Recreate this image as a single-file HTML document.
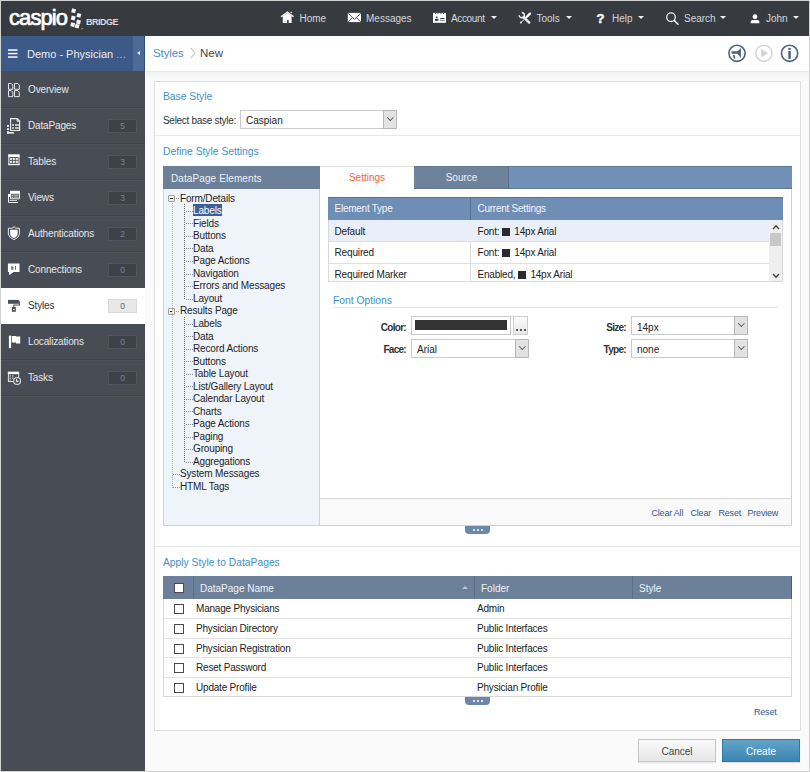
<!DOCTYPE html>
<html><head><meta charset="utf-8"><style>
*{box-sizing:border-box;margin:0;padding:0}
html,body{width:810px;height:772px;overflow:hidden}
body{position:relative;background:#d2d2d2;font-family:"Liberation Sans",sans-serif;font-size:10px;color:#333}
.a{position:absolute}
.t{position:absolute;white-space:nowrap;line-height:15px}
.caret{position:absolute;top:16.4px;width:0;height:0;border-left:3px solid transparent;border-right:3px solid transparent;border-top:3.5px solid #f0f0f0}
.nav{color:#d3d8de;font-size:10px;top:11px}
.item{position:absolute;left:1px;width:144px;height:36px}
.sl{position:absolute;left:1px;width:144px;height:1px}
.badge{position:absolute;left:108px;width:29px;height:14px;background:#3d4248;border:1px solid #50555c;color:#71849a;font-size:8.5px;line-height:12px;text-align:center}
.stxt{color:#e4e6e8;font-size:10px;letter-spacing:-0.15px}
.h{color:#4190c6;font-size:10.3px}
.sel{position:absolute;background:#fff;border:1px solid #cacaca}
.dd{position:absolute;right:0;top:0;width:14px;height:100%;background:#e2e2e2;border:1px solid #b8b8b8;margin:-1px -1px 0 0;height:calc(100% + 2px)}
.dd:after{content:"";position:absolute;left:3.5px;top:4px;width:3.6px;height:3.6px;border-right:1px solid #555;border-bottom:1px solid #555;transform:rotate(45deg)}
.tn{color:#1e1e1e;font-size:10px;letter-spacing:-0.15px}
.vd{position:absolute;width:1px;background-image:linear-gradient(to bottom,var(--c) 50%,transparent 50%);background-size:1px 2px}
.hd{position:absolute;height:1px;background-image:linear-gradient(to right,var(--c) 50%,transparent 50%);background-size:2px 1px}
.sq{display:inline-block;width:8px;height:8px;background:#2a2a2a;vertical-align:-1px;margin:0 4px 0 3px}
.cb{position:absolute;width:10px;height:10px;border:1px solid #4a4a4a;background:#fff}
.lnk{color:#33598a;font-size:9px;letter-spacing:-0.2px}
.handle{position:absolute;width:25px;height:8px;background:#6b88ab;border-radius:0 0 4px 4px}
.handle i{position:absolute;top:3px;width:2px;height:2px;background:#fff;border-radius:1px}
</style></head><body>
<div class="a" style="left:1px;top:1px;width:808px;height:770px;background:#fafafa"></div>
<div class="a" style="left:1px;top:1px;width:808px;height:35px;background:#373b40"></div>
<div class="t" style="left:9px;top:6.1px;font-size:22px;line-height:24px;color:#fff;letter-spacing:-0.9px;-webkit-text-stroke:0.7px #fff">caspio</div>
<svg class="a" style="left:64px;top:4px" width="26" height="28" viewBox="64 4 26 28"><g fill="#f4f4f4">
<rect x="71.6" y="8.8" width="4" height="4" transform="rotate(15 73.6 10.8)"/>
<rect x="76.9" y="13.4" width="4" height="4" transform="rotate(15 78.9 15.4)"/>
<rect x="71.2" y="16" width="4" height="4" transform="rotate(15 73.2 18)"/>
<rect x="76.5" y="20" width="4" height="4" transform="rotate(15 78.5 22)"/>
<rect x="70.7" y="22.7" width="4" height="4" transform="rotate(15 72.7 24.7)"/>
<rect x="75.1" y="24.1" width="4" height="4" transform="rotate(15 77.1 26.1)"/>
<rect x="81" y="28.2" width="2" height="1" fill="#999"/></g></svg>
<div class="t" style="left:86px;top:16.5px;font-size:9px;line-height:10px;color:#d8dbde;letter-spacing:-0.5px;font-weight:bold">BRIDGE</div>
<svg class="a" style="left:279px;top:10px" width="16" height="15" viewBox="279 10 16 15"><path d="M281 16.8 L287.4 12.2 L293.6 16.8" stroke="#f4f4f4" stroke-width="1.4" fill="none" stroke-linejoin="miter"/><path d="M282.8 16 L287.4 12.9 L291.6 16 V23.1 H288.7 V20 H287.1 V23.1 H282.8 Z" fill="#fff"/><rect x="290.5" y="11.8" width="1.6" height="1.3" fill="#ddd"/></svg>
<div class="t nav" style="left:299.5px">Home</div>
<svg class="a" style="left:346px;top:11px" width="17" height="13" viewBox="346 11 17 13"><rect x="347.8" y="12.9" width="13.2" height="9.2" fill="#fff"/><path d="M348 13.2 L354.4 19.4 L360.8 13.2 M348 21.8 L352.6 17.4 M360.8 21.8 L356.2 17.4" stroke="#555a60" stroke-width="1" fill="none"/></svg>
<div class="t nav" style="left:366px">Messages</div>
<svg class="a" style="left:432px;top:12px" width="15" height="12" viewBox="432 12 15 12"><rect x="433" y="12.9" width="13" height="9.9" fill="#fff"/><g fill="#373b40"><rect x="435.2" y="12.9" width="0.9" height="1.2"/><rect x="437.6" y="12.9" width="0.9" height="1.2"/><rect x="440.6" y="12.9" width="0.9" height="1.2"/><rect x="443" y="12.9" width="0.9" height="1.2"/><circle cx="436.7" cy="17.3" r="0.9"/><rect x="435" y="18.8" width="3.5" height="2"/><rect x="440.2" y="18" width="4.3" height="1.1"/></g><rect x="440.2" y="20" width="4.3" height="0.9" fill="#777"/></svg>
<div class="t nav" style="left:451px;letter-spacing:-0.35px">Account</div><span class="caret" style="left:490.5px"></span>
<svg class="a" style="left:517px;top:11px" width="16" height="14" viewBox="517 11 16 14"><path d="M521.8 12.6 A2.6 2.6 0 1 1 519.2 15.2" stroke="#f0f0f0" stroke-width="1.5" fill="none"/><path d="M523.6 17.2 L529.2 22.6" stroke="#f0f0f0" stroke-width="2.4" stroke-linecap="round"/><path d="M530 13.6 L526.4 17.2" stroke="#fff" stroke-width="2.3" stroke-linecap="round"/><path d="M525.8 17.8 L520.8 22.6" stroke="#e8e8e8" stroke-width="1"/><circle cx="521" cy="22.4" r="1" fill="#fff"/></svg>
<div class="t nav" style="left:536.5px">Tools</div><span class="caret" style="left:565.5px"></span>
<div class="t" style="left:596.5px;top:10.7px;font-weight:bold;font-size:13px;line-height:15px;color:#fff;-webkit-text-stroke:0.5px #fff">?</div>
<div class="t nav" style="left:612px">Help</div><span class="caret" style="left:638px"></span>
<svg class="a" style="left:664px;top:11px" width="16" height="15" viewBox="664 11 16 15"><circle cx="671" cy="17.2" r="4.3" fill="none" stroke="#eee" stroke-width="1.3"/><path d="M674.2 20.4 L678 24.2" stroke="#eee" stroke-width="1.6" stroke-linecap="round"/></svg>
<div class="t nav" style="left:684px">Search</div><span class="caret" style="left:720px"></span>
<svg class="a" style="left:749px;top:13px" width="12" height="12" viewBox="749 13 12 12"><circle cx="755" cy="16.7" r="2.4" fill="#fff"/><path d="M750.7 23.2 V21.6 Q750.7 19.9 752.5 19.9 H757.5 Q759.3 19.9 759.3 21.6 V23.2 Z" fill="#fff"/></svg>
<div class="t nav" style="left:766px">John</div><span class="caret" style="left:793px"></span>
<div class="a" style="left:1px;top:36px;width:144px;height:735px;background:#484d55"></div>
<div class="a" style="left:1px;top:36px;width:132px;height:35px;background:#3b5a87"></div>
<div class="a" style="left:133px;top:36px;width:12px;height:35px;background:#4c6b97;border-right:1px solid #2f4d78"></div>
<span class="a" style="left:136.5px;top:50.5px;width:0;height:0;border-top:2.7px solid transparent;border-bottom:2.7px solid transparent;border-right:3px solid #e6ebf2"></span>
<svg class="a" style="left:8px;top:48px" width="10" height="10" viewBox="0 0 10 10"><rect y="1.3" width="9.5" height="1.5" fill="#fff"/><rect y="4.8" width="9.5" height="1.5" fill="#fff"/><rect y="8.3" width="9.5" height="1.5" fill="#fff"/></svg>
<div class="t" style="left:27px;top:48px;font-size:11px;line-height:13px;color:#e8eef5">Demo - Physician <span style="color:#a9bad2;letter-spacing:0.3px">...</span></div>
<svg class="a" style="left:0;top:71px" width="24" height="36" viewBox="0 0 24 36"><g fill="none" stroke="#e2e4e6" stroke-width="1"><path d="M8.5 12.5 H11.3 L12.8 14 V18.3 H8.5 Z"/><path d="M14.5 12.5 H17.8 L19.3 14 V18.3 H14.5 Z"/><path d="M8.5 19.6 H11.3 L12.8 21.1 V25.6 H8.5 Z"/><path d="M14.5 19.6 H17.8 L19.3 21.1 V25.6 H14.5 Z"/></g></svg>
<div class="t stxt" style="left:28px;top:82.4px;color:#e4e6e8">Overview</div>
<div class="sl" style="top:107px;background:#40454b"></div><div class="sl" style="top:108px;background:#4e535a"></div>
<svg class="a" style="left:0;top:107px" width="24" height="36" viewBox="0 0 24 36"><path d="M10.6 11.6 H17.2 L19.6 14 V23.5 H10.6 Z" fill="none" stroke="#eee" stroke-width="1.1"/><path d="M17 11.6 V14.2 H19.6" fill="none" stroke="#eee" stroke-width="1"/><g fill="#eee"><rect x="12" y="17.3" width="2" height="1.4"/><rect x="15" y="17.3" width="4" height="1.4"/><rect x="12" y="20.3" width="2" height="1.4"/><rect x="15" y="20.3" width="4" height="1.4"/><rect x="7" y="18" width="2" height="1.9"/><rect x="7" y="21.2" width="2" height="1.9"/><rect x="7" y="24.3" width="2" height="2.3"/><rect x="7" y="25" width="7" height="1.6"/></g></svg>
<div class="t stxt" style="left:28px;top:118.4px;color:#e4e6e8">DataPages</div>
<div class="badge" style="top:119px;">5</div>
<div class="sl" style="top:143px;background:#40454b"></div><div class="sl" style="top:144px;background:#4e535a"></div>
<svg class="a" style="left:0;top:143px" width="24" height="36" viewBox="0 0 24 36"><rect x="8.8" y="12" width="10.2" height="9.6" fill="none" stroke="#eee" stroke-width="1"/><rect x="8.3" y="11.5" width="11.2" height="2.6" fill="#fff"/><g fill="#ddd"><rect x="9.9" y="15" width="2.2" height="2.2"/><rect x="12.8" y="15" width="2.2" height="2.2"/><rect x="15.7" y="15" width="2.2" height="2.2"/><rect x="9.9" y="17.9" width="2.2" height="2.2"/><rect x="12.8" y="17.9" width="2.2" height="2.2"/><rect x="15.7" y="17.9" width="2.2" height="2.2"/></g><rect x="8.3" y="20.9" width="11.2" height="1.2" fill="#fff"/></svg>
<div class="t stxt" style="left:28px;top:154.4px;color:#e4e6e8">Tables</div>
<div class="badge" style="top:155px;">3</div>
<div class="sl" style="top:179px;background:#40454b"></div><div class="sl" style="top:180px;background:#4e535a"></div>
<svg class="a" style="left:0;top:179px" width="24" height="36" viewBox="0 0 24 36"><rect x="10" y="11.8" width="10" height="3" fill="#fff"/><path d="M10.5 14.5 V19.8 H19.5 V14.5" fill="none" stroke="#eee" stroke-width="1"/><g fill="#ddd"><rect x="11.5" y="15.6" width="1.4" height="1.2"/><rect x="13.5" y="15.6" width="5" height="1"/><rect x="11.5" y="17.6" width="1.4" height="1.2"/><rect x="13.5" y="17.6" width="5" height="1"/></g><rect x="8" y="15" width="2" height="3" fill="#fff"/><path d="M8.5 18 V23.5 H18" fill="none" stroke="#eee" stroke-width="1"/><rect x="9.5" y="21" width="7.5" height="1" fill="#ccc"/></svg>
<div class="t stxt" style="left:28px;top:190.4px;color:#e4e6e8">Views</div>
<div class="badge" style="top:191px;">3</div>
<div class="sl" style="top:215px;background:#40454b"></div><div class="sl" style="top:216px;background:#4e535a"></div>
<svg class="a" style="left:0;top:215px" width="24" height="36" viewBox="0 0 24 36"><path d="M8.4 13.2 H12.6 L14 11.5 L15.4 13.2 H19.4 V19 Q19.4 22.4 14 24.7 Q8.4 22.4 8.4 19 Z" fill="none" stroke="#e6e6e6" stroke-width="1"/><path d="M10.2 14.8 H17.6 V19 Q17.6 21.6 14 23 Q10.2 21.6 10.2 19 Z" fill="#fff"/></svg>
<div class="t stxt" style="left:28px;top:226.4px;color:#e4e6e8">Authentications</div>
<div class="badge" style="top:227px;">2</div>
<div class="sl" style="top:251px;background:#40454b"></div><div class="sl" style="top:252px;background:#4e535a"></div>
<svg class="a" style="left:0;top:251px" width="24" height="36" viewBox="0 0 24 36"><path d="M7.9 12.4 H19.5 V20.9 H13.5 L9.3 24.3 L9 20.9 H7.9 Z" fill="#fff"/><g fill="#4a4f57"><rect x="11.4" y="14.8" width="1" height="3.8"/><rect x="12.2" y="16.2" width="1.2" height="2.4"/><rect x="15" y="14.9" width="1" height="1"/><rect x="15" y="16.3" width="1" height="2.3"/></g></svg>
<div class="t stxt" style="left:28px;top:262.4px;color:#e4e6e8">Connections</div>
<div class="badge" style="top:263px;">0</div>
<div class="item" style="top:288px;height:36px;background:#fff"></div>
<svg class="a" style="left:0;top:287px" width="24" height="36" viewBox="0 0 24 36"><g fill="#4a5058"><rect x="8" y="12.9" width="10.9" height="3.9"/><path d="M18.9 14.2 H20 V18.6 H14.3 V20 H13.3 V17.6 H19 V14.2 Z"/><rect x="11.9" y="19.9" width="3.9" height="4.9"/></g><circle cx="13.9" cy="22.5" r="0.7" fill="#fff"/></svg>
<div class="t stxt" style="left:28px;top:298.4px;color:#333">Styles</div>
<div class="badge" style="top:299px;background:#e8e8e8;border-color:#d9d9d9;color:#5a6470;">0</div>
<svg class="a" style="left:0;top:323px" width="24" height="36" viewBox="0 0 24 36"><rect x="8.9" y="12.6" width="2.2" height="12.5" fill="#fff"/><path d="M11.8 13.1 H16 V13.6 H20.2 V20.4 H16 V19.6 H11.8 Z" fill="#fff"/></svg>
<div class="t stxt" style="left:28px;top:334.4px;color:#e4e6e8">Localizations</div>
<div class="badge" style="top:335px;">0</div>
<div class="sl" style="top:359px;background:#40454b"></div><div class="sl" style="top:360px;background:#4e535a"></div>
<svg class="a" style="left:0;top:359px" width="24" height="36" viewBox="0 0 24 36"><rect x="8.4" y="13.3" width="10.2" height="9.2" fill="none" stroke="#e4e4e4" stroke-width="1"/><rect x="7.9" y="12.8" width="11.2" height="2.4" fill="#fff"/><g fill="#bbb"><rect x="9.5" y="16.3" width="1.6" height="1.3"/><rect x="12" y="16.3" width="1.6" height="1.3"/><rect x="9.5" y="18.6" width="1.6" height="1.3"/><rect x="12" y="18.6" width="1.6" height="1.3"/><rect x="9.5" y="20.6" width="1.6" height="1"/></g><circle cx="17.1" cy="21.9" r="3.4" fill="#484d55" stroke="#d8d8d8" stroke-width="1.2"/><path d="M16.6 19.8 V22.4 H18.6" fill="none" stroke="#eee" stroke-width="1.1"/></svg>
<div class="t stxt" style="left:28px;top:370.4px;color:#e4e6e8">Tasks</div>
<div class="badge" style="top:371px;">0</div>
<div class="sl" style="top:395px;background:#40454b"></div><div class="sl" style="top:396px;background:#4e535a"></div>
<div class="a" style="left:145px;top:36px;width:664px;height:35px;background:#fff"></div>
<div class="a" style="left:146px;top:71px;width:663px;height:1px;background:#e9e9e9"></div>
<div class="a" style="left:146px;top:72px;width:663px;height:7px;background:linear-gradient(#f3f3f3,#fafafa)"></div>
<div class="t" style="left:153px;top:46px;font-size:11.5px;line-height:14px;color:#4a8fc2;letter-spacing:-0.1px">Styles</div>
<svg class="a" style="left:190px;top:47px" width="6" height="12" viewBox="0 0 6 12"><path d="M0.8 0.8 L5 6 L0.8 11.2" stroke="#c4c4c4" stroke-width="1.1" fill="none"/></svg>
<div class="t" style="left:200px;top:46px;font-size:11.5px;line-height:14px;color:#444">New</div>
<svg class="a" style="left:726px;top:42px" width="24" height="24" viewBox="726 42 24 24"><circle cx="737" cy="53.3" r="8.1" fill="none" stroke="#4f6378" stroke-width="1.6"/><path d="M732 51.2 H737.5 L740.9 48 V57.9 L737.5 53.8 H732 Q731.3 53.8 731.3 52.5 Q731.3 51.2 732 51.2 Z" fill="#4f6378"/><path d="M732.8 55.1 H734.6 L735.5 58.6 H733.7 Z" fill="#4f6378"/></svg>
<svg class="a" style="left:752px;top:42px" width="24" height="24" viewBox="752 42 24 24"><circle cx="763.9" cy="53.3" r="8.1" fill="none" stroke="#d4d4d4" stroke-width="1.5"/><path d="M761.2 49.1 L768 53.2 L761.2 57.1 Z" fill="#d2d2d2"/></svg>
<svg class="a" style="left:778px;top:42px" width="24" height="24" viewBox="778 42 24 24"><circle cx="789.6" cy="53.3" r="8.1" fill="none" stroke="#4f6378" stroke-width="1.6"/><rect x="788.3" y="47.9" width="2.5" height="1.9" fill="#4f6378"/><rect x="788.3" y="50.9" width="2.5" height="8" fill="#4f6378"/></svg>
<div class="a" style="left:154px;top:81px;width:647px;height:650px;background:#fff;border:1px solid #dedede"></div>
<div class="t h" style="left:163px;top:89px">Base Style</div>
<div class="t" style="left:163px;top:112.5px;letter-spacing:-0.3px;color:#333">Select base style:</div>
<div class="sel" style="left:240px;top:110px;width:157px;height:19px"><span class="t" style="left:5px;top:1.5px;color:#222">Caspian</span><span class="dd"></span></div>
<div class="a" style="left:155px;top:135px;width:645px;height:1px;background:#e9e9e9"></div>
<div class="t h" style="left:163px;top:144px">Define Style Settings</div>
<div class="a" style="left:163px;top:166px;width:157px;height:360px;background:#eff4fb;border:1px solid #d2d2d2"></div>
<div class="a" style="left:163px;top:166px;width:157px;height:23px;background:#6c8099"></div>
<div class="t" style="left:171px;top:171px;color:#eef2f6;font-size:10px;letter-spacing:0.1px">DataPage Elements</div>
<div class="a" style="left:168px;top:195px;width:7px;height:7px;border:1px solid #a0a0a0;background:linear-gradient(#fff,#e6e6e6);border-radius:1px"></div>
<div class="a" style="left:170px;top:198px;width:3px;height:1px;background:#333"></div>
<div class="hd" style="--c:#999;left:176px;top:198px;width:4px"></div>
<div class="t tn" style="left:180px;top:190.60px">Form/Details</div>
<div class="hd" style="--c:#888;left:186px;top:211px;width:7px"></div>
<div class="a" style="left:193px;top:203.64px;width:29px;height:12px;background:#3d6098"></div>
<div class="t tn" style="left:193px;top:203.14px;color:#fff">Labels</div>
<div class="hd" style="--c:#888;left:186px;top:223px;width:7px"></div>
<div class="t tn" style="left:193px;top:215.68px">Fields</div>
<div class="hd" style="--c:#888;left:186px;top:236px;width:7px"></div>
<div class="t tn" style="left:193px;top:228.22px">Buttons</div>
<div class="hd" style="--c:#888;left:186px;top:248px;width:7px"></div>
<div class="t tn" style="left:193px;top:240.76px">Data</div>
<div class="hd" style="--c:#888;left:186px;top:261px;width:7px"></div>
<div class="t tn" style="left:193px;top:253.30px">Page Actions</div>
<div class="hd" style="--c:#888;left:186px;top:274px;width:7px"></div>
<div class="t tn" style="left:193px;top:265.84px">Navigation</div>
<div class="hd" style="--c:#888;left:186px;top:286px;width:7px"></div>
<div class="t tn" style="left:193px;top:278.38px">Errors and Messages</div>
<div class="hd" style="--c:#888;left:186px;top:299px;width:7px"></div>
<div class="t tn" style="left:193px;top:290.92px">Layout</div>
<div class="a" style="left:168px;top:308px;width:7px;height:7px;border:1px solid #a0a0a0;background:linear-gradient(#fff,#e6e6e6);border-radius:1px"></div>
<div class="a" style="left:170px;top:311px;width:3px;height:1px;background:#333"></div>
<div class="hd" style="--c:#999;left:176px;top:311px;width:4px"></div>
<div class="t tn" style="left:180px;top:303.46px">Results Page</div>
<div class="hd" style="--c:#888;left:186px;top:324px;width:7px"></div>
<div class="t tn" style="left:193px;top:316.00px">Labels</div>
<div class="hd" style="--c:#888;left:186px;top:336px;width:7px"></div>
<div class="t tn" style="left:193px;top:328.54px">Data</div>
<div class="hd" style="--c:#888;left:186px;top:349px;width:7px"></div>
<div class="t tn" style="left:193px;top:341.08px">Record Actions</div>
<div class="hd" style="--c:#888;left:186px;top:361px;width:7px"></div>
<div class="t tn" style="left:193px;top:353.62px">Buttons</div>
<div class="hd" style="--c:#888;left:186px;top:374px;width:7px"></div>
<div class="t tn" style="left:193px;top:366.16px">Table Layout</div>
<div class="hd" style="--c:#888;left:186px;top:386px;width:7px"></div>
<div class="t tn" style="left:193px;top:378.70px">List/Gallery Layout</div>
<div class="hd" style="--c:#888;left:186px;top:399px;width:7px"></div>
<div class="t tn" style="left:193px;top:391.24px">Calendar Layout</div>
<div class="hd" style="--c:#888;left:186px;top:411px;width:7px"></div>
<div class="t tn" style="left:193px;top:403.78px">Charts</div>
<div class="hd" style="--c:#888;left:186px;top:424px;width:7px"></div>
<div class="t tn" style="left:193px;top:416.32px">Page Actions</div>
<div class="hd" style="--c:#888;left:186px;top:437px;width:7px"></div>
<div class="t tn" style="left:193px;top:428.86px">Paging</div>
<div class="hd" style="--c:#888;left:186px;top:449px;width:7px"></div>
<div class="t tn" style="left:193px;top:441.40px">Grouping</div>
<div class="hd" style="--c:#888;left:186px;top:462px;width:7px"></div>
<div class="t tn" style="left:193px;top:453.94px">Aggregations</div>
<div class="hd" style="--c:#999;left:173px;top:474px;width:7px"></div>
<div class="t tn" style="left:180px;top:466.48px">System Messages</div>
<div class="hd" style="--c:#999;left:173px;top:487px;width:7px"></div>
<div class="t tn" style="left:180px;top:479.02px">HTML Tags</div>
<div class="vd" style="--c:#bdbdbd;left:172px;top:203px;height:285px"></div>
<div class="vd" style="--c:#666;left:184px;top:204px;height:96px"></div>
<div class="vd" style="--c:#666;left:184px;top:317px;height:146px"></div>
<div class="a" style="left:320px;top:166px;width:472px;height:23px;background:#7090b7"></div>
<div class="a" style="left:320px;top:166px;width:94px;height:23px;background:#fff"></div>
<div class="t" style="left:320px;top:170px;width:94px;text-align:center;color:#ec6641">Settings</div>
<div class="a" style="left:414px;top:166px;width:95px;height:23px;background:#6e8299"></div>
<div class="a" style="left:414px;top:166px;width:378px;height:1px;background:#5f7895"></div>
<div class="a" style="left:414px;top:188px;width:378px;height:1px;background:#5f7895"></div>
<div class="a" style="left:508px;top:166px;width:1px;height:23px;background:#5a6d84"></div>
<div class="a" style="left:320px;top:166px;width:94px;height:1px;background:#dedede"></div>
<div class="t" style="left:414px;top:170px;width:95px;text-align:center;color:#eef2f6">Source</div>
<div class="a" style="left:320px;top:189px;width:472px;height:337px;background:#fff;border:1px solid #d0d0d0;border-left:none;border-top:none"></div>
<div class="a" style="left:328px;top:197px;width:455px;height:85px;border:1px solid #d8d8d8;background:#fff"></div>
<div class="a" style="left:328px;top:197px;width:455px;height:23px;background:#6f8eb6;border-top:1px solid #5a7396"></div>
<div class="a" style="left:470px;top:197px;width:1px;height:85px;background:#dcdcdc"></div>
<div class="a" style="left:470px;top:197px;width:1px;height:23px;background:#57708f"></div>
<div class="t" style="left:334.5px;top:201px;color:#f2f5f9;letter-spacing:-0.25px">Element Type</div>
<div class="t" style="left:477.5px;top:201px;color:#f2f5f9;letter-spacing:-0.25px">Current Settings</div>
<div class="a" style="left:329px;top:220px;width:441px;height:21px;background:#e9eef8"></div>
<div class="a" style="left:329px;top:241px;width:441px;height:1px;background:#e0e0e0"></div>
<div class="a" style="left:329px;top:263px;width:441px;height:1px;background:#e0e0e0"></div>
<div class="t" style="left:334.5px;top:223.6px;color:#222;letter-spacing:-0.15px">Default</div>
<div class="t" style="left:477.5px;top:223.6px;color:#222;letter-spacing:-0.2px">Font:<span class="sq"></span>14px Arial</div>
<div class="t" style="left:334.5px;top:245.4px;color:#222;letter-spacing:-0.15px">Required</div>
<div class="t" style="left:477.5px;top:245.4px;color:#222;letter-spacing:-0.2px">Font:<span class="sq"></span>14px Arial</div>
<div class="t" style="left:334.5px;top:267.2px;color:#222;letter-spacing:-0.15px">Required Marker</div>
<div class="t" style="left:477.5px;top:267.2px;color:#222;letter-spacing:-0.2px">Enabled,<span class="sq"></span>14px Arial</div>
<div class="a" style="left:769px;top:220px;width:13px;height:61px;background:#efefef"></div>
<div class="a" style="left:770px;top:233px;width:11px;height:13px;background:#c8c8c8"></div>
<svg class="a" style="left:772px;top:224px" width="8" height="6" viewBox="0 0 8 6"><path d="M1 5 L4 1.8 L7 5" stroke="#444" stroke-width="1.4" fill="none"/></svg>
<svg class="a" style="left:772px;top:272.5px" width="8" height="6" viewBox="0 0 8 6"><path d="M1 1 L4 4.2 L7 1" stroke="#444" stroke-width="1.4" fill="none"/></svg>
<div class="t h" style="left:333px;top:293px">Font Options</div>
<div class="a" style="left:333px;top:307px;width:445px;height:1px;background:#e6e6e6"></div>
<div class="t" style="left:350px;top:320px;width:56px;text-align:right;font-weight:bold;font-size:10px;letter-spacing:-0.7px;color:#333">Color:</div>
<div class="t" style="left:350px;top:342px;width:56px;text-align:right;font-weight:bold;font-size:10px;letter-spacing:-0.7px;color:#333">Face:</div>
<div class="t" style="left:570px;top:320px;width:56px;text-align:right;font-weight:bold;font-size:10px;letter-spacing:-0.7px;color:#333">Size:</div>
<div class="t" style="left:570px;top:342px;width:56px;text-align:right;font-weight:bold;font-size:10px;letter-spacing:-0.7px;color:#333">Type:</div>
<div class="sel" style="left:411px;top:316px;width:100px;height:19px"><span class="a" style="left:3px;top:3px;width:92px;height:10px;background:#333"></span></div>
<div class="a" style="left:513px;top:316px;width:15px;height:19px;background:linear-gradient(#fbfbfb,#e8e8e8);border:1px solid #cfcfcf"><span class="a" style="left:2px;top:12px;width:2px;height:2px;background:#555"></span><span class="a" style="left:6px;top:12px;width:2px;height:2px;background:#555"></span><span class="a" style="left:10px;top:12px;width:2px;height:2px;background:#555"></span></div>
<div class="sel" style="left:411px;top:339px;width:118px;height:19px"><span class="t" style="left:5px;top:1.5px;color:#222">Arial</span><span class="dd"></span></div>
<div class="sel" style="left:631px;top:316px;width:117px;height:19px"><span class="t" style="left:5px;top:3px;color:#222">14px</span><span class="dd"></span></div>
<div class="sel" style="left:631px;top:339px;width:117px;height:19px"><span class="t" style="left:5px;top:1.5px;color:#222">none</span><span class="dd"></span></div>
<div class="a" style="left:320px;top:498px;width:472px;height:28px;background:#f9f9f9;border-top:1px solid #d6d6d6;border-bottom:1px solid #d0d0d0;border-right:1px solid #d0d0d0"></div>
<div class="t lnk" style="left:651.5px;top:505.5px">Clear All</div>
<div class="t lnk" style="left:690.5px;top:505.5px">Clear</div>
<div class="t lnk" style="left:718.5px;top:505.5px">Reset</div>
<div class="t lnk" style="left:747.5px;top:505.5px">Preview</div>
<div class="handle" style="left:465px;top:526px"><i style="left:8px"></i><i style="left:12px"></i><i style="left:16px"></i></div>
<div class="a" style="left:155px;top:546px;width:645px;height:1px;background:#e9e9e9"></div>
<div class="t h" style="left:163px;top:555px">Apply Style to DataPages</div>
<div class="a" style="left:163px;top:576px;width:629px;height:121px;border:1px solid #d8d8d8;background:#fff"></div>
<div class="a" style="left:163px;top:576px;width:629px;height:23px;background:#6c8099;border-right:1px solid #4d5f74"></div>
<div class="a" style="left:193px;top:576px;width:1px;height:23px;background:#5c6f88"></div>
<div class="a" style="left:474px;top:576px;width:1px;height:23px;background:#5c6f88"></div>
<div class="a" style="left:632px;top:576px;width:1px;height:23px;background:#5c6f88"></div>
<div class="cb" style="left:174px;top:583px"></div>
<div class="t" style="left:200px;top:581px;color:#f0f3f6">DataPage Name</div>
<span class="a" style="left:462px;top:586px;width:0;height:0;border-left:3.5px solid transparent;border-right:3.5px solid transparent;border-bottom:3.5px solid #b8c3d0"></span>
<div class="t" style="left:481px;top:581px;color:#f0f3f6">Folder</div>
<div class="t" style="left:639px;top:581px;color:#f0f3f6">Style</div>
<div class="cb" style="left:174px;top:604px"></div>
<div class="t" style="left:196px;top:601.3px;color:#222;letter-spacing:-0.2px">Manage Physicians</div>
<div class="t" style="left:477px;top:601.3px;color:#222;letter-spacing:-0.2px">Admin</div>
<div class="a" style="left:164px;top:618.1px;width:627px;height:1px;background:#e2e2e2"></div>
<div class="cb" style="left:174px;top:624px"></div>
<div class="t" style="left:196px;top:620.9px;color:#222;letter-spacing:-0.2px">Physician Directory</div>
<div class="t" style="left:477px;top:620.9px;color:#222;letter-spacing:-0.2px">Public Interfaces</div>
<div class="a" style="left:164px;top:637.7px;width:627px;height:1px;background:#e2e2e2"></div>
<div class="cb" style="left:174px;top:644px"></div>
<div class="t" style="left:196px;top:640.5px;color:#222;letter-spacing:-0.2px">Physician Registration</div>
<div class="t" style="left:477px;top:640.5px;color:#222;letter-spacing:-0.2px">Public Interfaces</div>
<div class="a" style="left:164px;top:657.3px;width:627px;height:1px;background:#e2e2e2"></div>
<div class="cb" style="left:174px;top:663px"></div>
<div class="t" style="left:196px;top:660.1px;color:#222;letter-spacing:-0.2px">Reset Password</div>
<div class="t" style="left:477px;top:660.1px;color:#222;letter-spacing:-0.2px">Public Interfaces</div>
<div class="a" style="left:164px;top:676.9px;width:627px;height:1px;background:#e2e2e2"></div>
<div class="cb" style="left:174px;top:683px"></div>
<div class="t" style="left:196px;top:679.7px;color:#222;letter-spacing:-0.2px">Update Profile</div>
<div class="t" style="left:477px;top:679.7px;color:#222;letter-spacing:-0.2px">Physician Profile</div>
<div class="handle" style="left:465px;top:697px"><i style="left:8px"></i><i style="left:12px"></i><i style="left:16px"></i></div>
<div class="t lnk" style="left:754px;top:705px">Reset</div>
<div class="a" style="left:638px;top:739px;width:78px;height:23px;background:linear-gradient(#fafafa,#e6e6e6);border:1px solid #c6c6c6;box-shadow:0 1px 1px rgba(0,0,0,0.08)"></div>
<div class="t" style="left:638px;top:743.5px;width:78px;text-align:center;font-size:10px;color:#444">Cancel</div>
<div class="a" style="left:722px;top:739px;width:78px;height:23px;background:linear-gradient(#63a3c8,#3a86b2);border:1px solid #2f7aa5;box-shadow:0 1px 1px rgba(0,0,0,0.1)"></div>
<div class="t" style="left:722px;top:743.5px;width:78px;text-align:center;font-size:10px;color:#fff">Create</div>
</body></html>
